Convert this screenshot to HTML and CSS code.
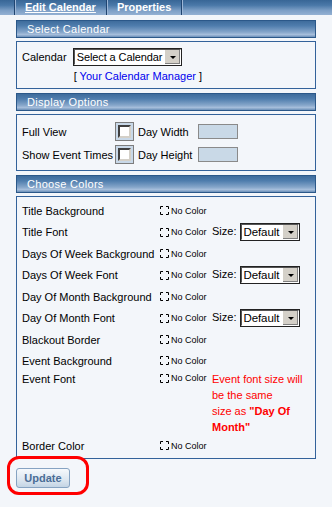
FILE: index.html
```html
<!DOCTYPE html>
<html lang="en">
<head>
    <meta charset="UTF-8">
    <title>Edit Calendar</title>
    <link rel="stylesheet" href="styles.css">
</head>
<body>
    <div class="tabs">
        <span class="tab active">Edit Calendar</span>
        <span class="tab">Properties</span>
        <span class="tab-rest"></span>
    </div>

    <div class="page">
        <div class="section">
            <div class="section-title">Select Calendar</div>
            <div class="section-box select-box">
                <span class="label">Calendar</span>
                <div class="pick">
                    <div class="dropdown wide"><span>Select a Calendar</span><i class="arrow"></i></div>
                    <div class="manager">[ <a href="#">Your Calendar Manager</a> ]</div>
                </div>
            </div>
        </div>

        <div class="section">
            <div class="section-title">Display Options</div>
            <div class="section-box options-box">
                <span class="label">Full View</span>
                <span class="check"><i></i></span>
                <span class="label">Day Width</span>
                <span class="field"></span>

                <span class="label">Show Event Times</span>
                <span class="check"><i></i></span>
                <span class="label">Day Height</span>
                <span class="field"></span>
            </div>
        </div>

        <div class="section">
            <div class="section-title">Choose Colors</div>
            <div class="section-box colors-box">
                <div class="color-row">
                    <span>Title Background</span>
                    <span class="swatch"><svg width="9" height="9" viewBox="0 0 9 9"><path d="M0.5 3V0.5H3M6 0.5H8.5V3M8.5 6V8.5H6M3 8.5H0.5V6" fill="none" stroke="#000"/></svg>No Color</span>
                </div>
                <div class="color-row sized">
                    <span>Title Font</span>
                    <span class="swatch"><svg width="9" height="9" viewBox="0 0 9 9"><path d="M0.5 3V0.5H3M6 0.5H8.5V3M8.5 6V8.5H6M3 8.5H0.5V6" fill="none" stroke="#000"/></svg>No Color</span>
                    <span class="size">Size: <span class="dropdown small"><span>Default</span><i class="arrow"></i></span></span>
                </div>
                <div class="color-row">
                    <span>Days Of Week Background</span>
                    <span class="swatch"><svg width="9" height="9" viewBox="0 0 9 9"><path d="M0.5 3V0.5H3M6 0.5H8.5V3M8.5 6V8.5H6M3 8.5H0.5V6" fill="none" stroke="#000"/></svg>No Color</span>
                </div>
                <div class="color-row sized">
                    <span>Days Of Week Font</span>
                    <span class="swatch"><svg width="9" height="9" viewBox="0 0 9 9"><path d="M0.5 3V0.5H3M6 0.5H8.5V3M8.5 6V8.5H6M3 8.5H0.5V6" fill="none" stroke="#000"/></svg>No Color</span>
                    <span class="size">Size: <span class="dropdown small"><span>Default</span><i class="arrow"></i></span></span>
                </div>
                <div class="color-row">
                    <span>Day Of Month Background</span>
                    <span class="swatch"><svg width="9" height="9" viewBox="0 0 9 9"><path d="M0.5 3V0.5H3M6 0.5H8.5V3M8.5 6V8.5H6M3 8.5H0.5V6" fill="none" stroke="#000"/></svg>No Color</span>
                </div>
                <div class="color-row sized">
                    <span>Day Of Month Font</span>
                    <span class="swatch"><svg width="9" height="9" viewBox="0 0 9 9"><path d="M0.5 3V0.5H3M6 0.5H8.5V3M8.5 6V8.5H6M3 8.5H0.5V6" fill="none" stroke="#000"/></svg>No Color</span>
                    <span class="size">Size: <span class="dropdown small"><span>Default</span><i class="arrow"></i></span></span>
                </div>
                <div class="color-row">
                    <span>Blackout Border</span>
                    <span class="swatch"><svg width="9" height="9" viewBox="0 0 9 9"><path d="M0.5 3V0.5H3M6 0.5H8.5V3M8.5 6V8.5H6M3 8.5H0.5V6" fill="none" stroke="#000"/></svg>No Color</span>
                </div>
                <div class="color-row">
                    <span>Event Background</span>
                    <span class="swatch"><svg width="9" height="9" viewBox="0 0 9 9"><path d="M0.5 3V0.5H3M6 0.5H8.5V3M8.5 6V8.5H6M3 8.5H0.5V6" fill="none" stroke="#000"/></svg>No Color</span>
                </div>
                <div class="color-row note-row">
                    <span>Event Font</span>
                    <span class="swatch"><svg width="9" height="9" viewBox="0 0 9 9"><path d="M0.5 3V0.5H3M6 0.5H8.5V3M8.5 6V8.5H6M3 8.5H0.5V6" fill="none" stroke="#000"/></svg>No Color</span>
                    <span class="note">Event font size will<br>be the same<br>size as <b>"Day Of<br>Month"</b></span>
                </div>
                <div class="color-row">
                    <span>Border Color</span>
                    <span class="swatch"><svg width="9" height="9" viewBox="0 0 9 9"><path d="M0.5 3V0.5H3M6 0.5H8.5V3M8.5 6V8.5H6M3 8.5H0.5V6" fill="none" stroke="#000"/></svg>No Color</span>
                </div>
            </div>
        </div>

        <div class="actions">
            <button class="update">Update</button>
            <div class="highlight"></div>
        </div>
    </div>
</body>
</html>
```

FILE: styles.css
```css
body {
    margin: 0;
    min-height: 507px;
    background-color: #f3f6fa;
    font-family: "Liberation Sans", Arial, sans-serif;
    font-size: 11px;
    color: #000;
}

/* top tab strip */
.tabs {
    display: flex;
    height: 15px;
    padding-left: 14px;
    background: linear-gradient(#386696 0%, #4a78a8 35%, #7d9fc6 70%, #94b1d3 100%);
}
.tab {
    color: #fff;
    font-weight: bold;
    font-size: 11px;
    line-height: 15px;
    white-space: nowrap;
    padding: 0 10px;
    border-left: 1px solid #1f4470;
    box-shadow: inset 1px 0 0 #9cb6d6;
}
.tab.active {
    text-decoration: underline;
}
.tab-rest {
    flex: 1;
    border-left: 1px solid #1f4470;
    box-shadow: inset 1px 0 0 #9cb6d6;
}

.page {
    padding: 5px 16px 30px;
    width: 300px;
}

.section {
    margin-bottom: 4px;
}
.section-title {
    height: 16px;
    line-height: 17px;
    padding-left: 10px;
    color: #fff;
    letter-spacing: 0.3px;
    border: 1px solid #2b5889;
    background: linear-gradient(#3e6c9c 0%, #4f7dad 30%, #86a6ca 70%, #a6bedb 85%, #6b8fb8 100%);
}
.section-box {
    margin-top: 3px;
    border: 1px solid #33629a;
}

/* select calendar */
.select-box {
    display: flex;
    gap: 6px;
    padding: 6px 5px 7px;
    height: 33px;
}
.select-box .label {
    padding-top: 3px;
}
.manager {
    margin-top: 4px;
    padding-left: 1px;
}
.manager a {
    color: #0000ee;
    text-decoration: none;
}

.dropdown {
    display: flex;
    align-items: center;
    box-sizing: border-box;
    height: 18px;
    border: 2px solid;
    border-color: #555 #fff #fff #555;
    outline: 1px solid #222;
    outline-offset: -1px;
    background: #fff;
}
.dropdown span {
    flex: 1;
    padding-left: 2px;
    font-size: 11px;
    letter-spacing: -0.1px;
    white-space: nowrap;
    overflow: hidden;
}
.dropdown.wide {
    width: 109px;
}
.dropdown.small {
    display: inline-flex;
    width: 60px;
    vertical-align: middle;
}
.dropdown.small span {
    font-size: 11.5px;
}
.arrow {
    position: relative;
    flex: none;
    width: 15px;
    height: 14px;
    background: #d4d0c8;
    border-left: 1px solid #fff;
    box-shadow: inset -1px -1px 0 #808080;
}
.arrow::after {
    content: "";
    position: absolute;
    left: 5px;
    top: 6px;
    border: 3px solid transparent;
    border-top: 3px solid #000;
    border-bottom: 0;
}

/* display options */
.options-box {
    display: grid;
    grid-template-columns: 93px 23px 60px 40px;
    grid-auto-rows: 19px;
    row-gap: 4px;
    align-items: center;
    padding: 7px 5px 6px;
}
.check {
    display: flex;
    align-items: center;
    justify-content: center;
    width: 19px;
    height: 19px;
    box-sizing: border-box;
    border: 1px solid #7d7d7d;
    background: #c8d8e8;
}
.check i {
    width: 13px;
    height: 13px;
    box-sizing: border-box;
    background: #fff;
    border: 2px solid;
    border-color: #404040 #d4d0c8 #d4d0c8 #404040;
}
.field {
    width: 40px;
    height: 15px;
    box-sizing: border-box;
    border: 1px solid #8a8a8a;
    background: #c9d9e7;
}

/* colors */
.colors-box {
    padding: 3px 5px 2px;
}
.color-row {
    display: grid;
    grid-template-columns: 138px 52px auto;
    align-items: center;
    height: 21px;
}
.color-row.sized {
    height: 22px;
}
.swatch {
    display: flex;
    align-items: center;
    gap: 2px;
    font-size: 9px;
}
.size {
    white-space: nowrap;
}
.note-row {
    align-items: start;
    height: auto;
    padding-top: 2px;
}
.note {
    color: #ff0000;
    line-height: 16px;
    margin-top: -2px;
    white-space: nowrap;
}

.actions {
    position: relative;
    padding-top: 5px;
}
.update {
    width: 54px;
    height: 20px;
    padding: 0;
    font-family: "Liberation Sans", Arial, sans-serif;
    font-size: 11px;
    font-weight: bold;
    color: #4a6d96;
    border: 1px solid #86a3c2;
    border-radius: 3px;
    background: linear-gradient(#f6f9fc, #dce6f0 60%, #c4d4e4);
}
.highlight {
    position: absolute;
    left: -9px;
    top: -7px;
    width: 76px;
    height: 33px;
    border: 3px solid #ff0000;
    border-radius: 12px;
}
```
